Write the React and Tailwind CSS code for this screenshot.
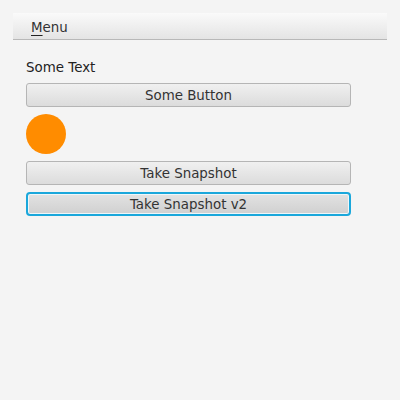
export default function App() {
  const font = { fontFamily: '"DejaVu Sans", sans-serif' };
  return (
    <div className="w-[400px] h-[400px] bg-[#f4f4f4] p-[13px] text-[13.4px] leading-[16px]" style={font}>
      <div className="h-[27px] border-b border-[#b8b8b8] bg-gradient-to-b from-[#fafafa] to-[#e4e4e4] flex items-center pl-[18px] pt-[3px] text-[#333333]">
        <span><span className="underline underline-offset-[3px] decoration-[#222]">M</span>enu</span>
      </div>
      <div className="px-[13px] pt-[20px] flex flex-col w-[351px]">
        <div className="h-[17px] text-[#222] mb-[6px]">Some Text</div>
        <button className="h-[24px] w-full rounded-[3px] border border-[#b5b5b5] bg-gradient-to-b from-[#f0f0f0] to-[#dcdcdc] text-[#333] mb-[7px] pt-[1px] flex items-center justify-center">Some Button</button>
        <div className="w-[40px] h-[40px] rounded-full bg-[#ff8c00] mb-[7px]"></div>
        <button className="h-[24px] w-full rounded-[3px] border border-[#b5b5b5] bg-gradient-to-b from-[#f0f0f0] to-[#dcdcdc] text-[#333] mb-[7px] pt-[1px] flex items-center justify-center">Take Snapshot</button>
        <button className="h-[24px] w-full rounded-[4px] border-2 border-[#1aa7db] shadow-[inset_0_0_0_1px_#eef6f9] bg-gradient-to-b from-[#e2e2e2] to-[#d0d0d0] text-[#333] pt-[1px] flex items-center justify-center">Take Snapshot v2</button>
      </div>
    </div>
  );
}
